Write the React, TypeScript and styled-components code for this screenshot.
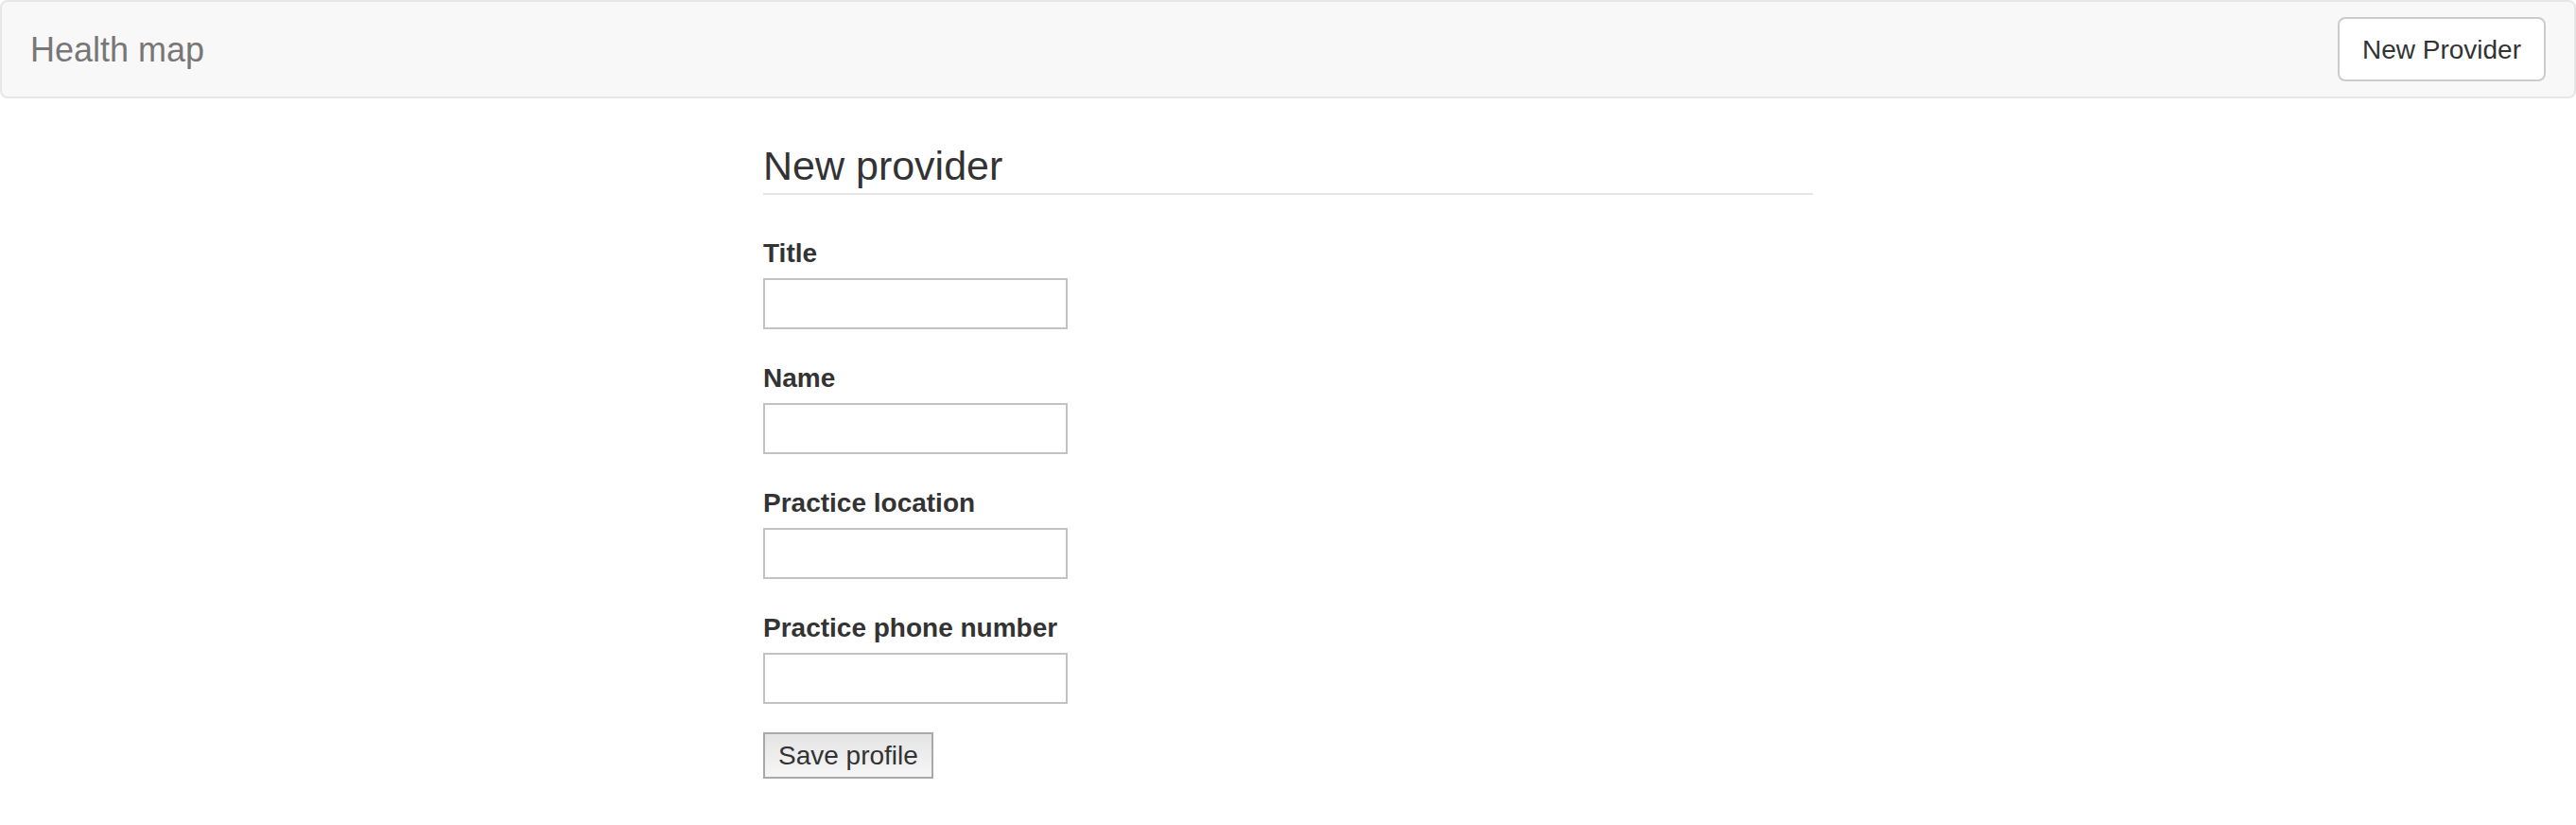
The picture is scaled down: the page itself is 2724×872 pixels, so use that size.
import React from "react";
import styled, { createGlobalStyle } from "styled-components";

const Global = createGlobalStyle`
  html, body { margin: 0; padding: 0; background: #fff; }
  body {
    font-family: "Liberation Sans", Arial, Helvetica, sans-serif;
    font-size: 28px;
    line-height: 40px;
    color: #333;
  }
  * { box-sizing: border-box; }
`;

const Navbar = styled.nav`
  display: flex;
  align-items: flex-start;
  justify-content: space-between;
  min-height: 104px;
  background: #f8f8f8;
  border: 2px solid #e7e7e7;
  border-radius: 8px;
  margin-bottom: 40px;
  padding: 0 30px;
`;

const Brand = styled.a`
  display: block;
  height: 100px;
  padding: 31px 0 29px;
  font-size: 36px;
  line-height: 40px;
  color: #777;
  text-decoration: none;
`;

const NavButton = styled.button`
  margin: 16px 0;
  height: 68px;
  padding: 12px 24px;
  font-family: inherit;
  font-size: 28px;
  line-height: 42px;
  color: #333;
  background: #fff;
  border: 2px solid #ccc;
  border-radius: 8px;
  cursor: pointer;
`;

const Container = styled.main`
  width: 2340px;
  margin: 0 auto;
  padding: 0 30px;
`;

const Column = styled.div`
  width: 1110px;
  margin-left: 585px;
`;

const Legend = styled.h1`
  margin: 0 0 42px;
  padding-top: 2px;
  font-size: 43px;
  line-height: 58px;
  font-weight: 400;
  color: #333;
  border-bottom: 2px solid #e5e5e5;
`;

const Form = styled.form`
  display: flex;
  flex-direction: column;
  align-items: flex-start;
`;

const Field = styled.div`
  display: flex;
  flex-direction: column;
  align-items: flex-start;
  margin-bottom: 32px;
`;

const Label = styled.label`
  font-weight: 700;
  font-size: 28px;
  line-height: 40px;
  margin-bottom: 6px;
  color: #333;
`;

const Input = styled.input`
  width: 322px;
  height: 54px;
  border: 2px solid #c2c2c2;
  background: #fff;
  padding: 2px 4px;
  font-family: inherit;
  font-size: 28px;
  outline: none;
`;

const SaveButton = styled.button`
  margin-top: -2px;
  height: 49px;
  padding: 2px 14px;
  font-family: inherit;
  font-size: 28px;
  line-height: 40px;
  color: #333;
  background: linear-gradient(#e4e4e4, #f6f6f6);
  border: 2px solid #a9a9a9;
  border-radius: 0;
`;

const fields = ["Title", "Name", "Practice location", "Practice phone number"];

export default function App() {
  return (
    <>
      <Global />
      <Navbar>
        <Brand href="#">Health map</Brand>
        <NavButton type="button">New Provider</NavButton>
      </Navbar>
      <Container>
        <Column>
          <Legend>New provider</Legend>
          <Form onSubmit={(e) => e.preventDefault()}>
            {fields.map((f) => (
              <Field key={f}>
                <Label>{f}</Label>
                <Input type="text" />
              </Field>
            ))}
            <SaveButton type="submit">Save profile</SaveButton>
          </Form>
        </Column>
      </Container>
    </>
  );
}
